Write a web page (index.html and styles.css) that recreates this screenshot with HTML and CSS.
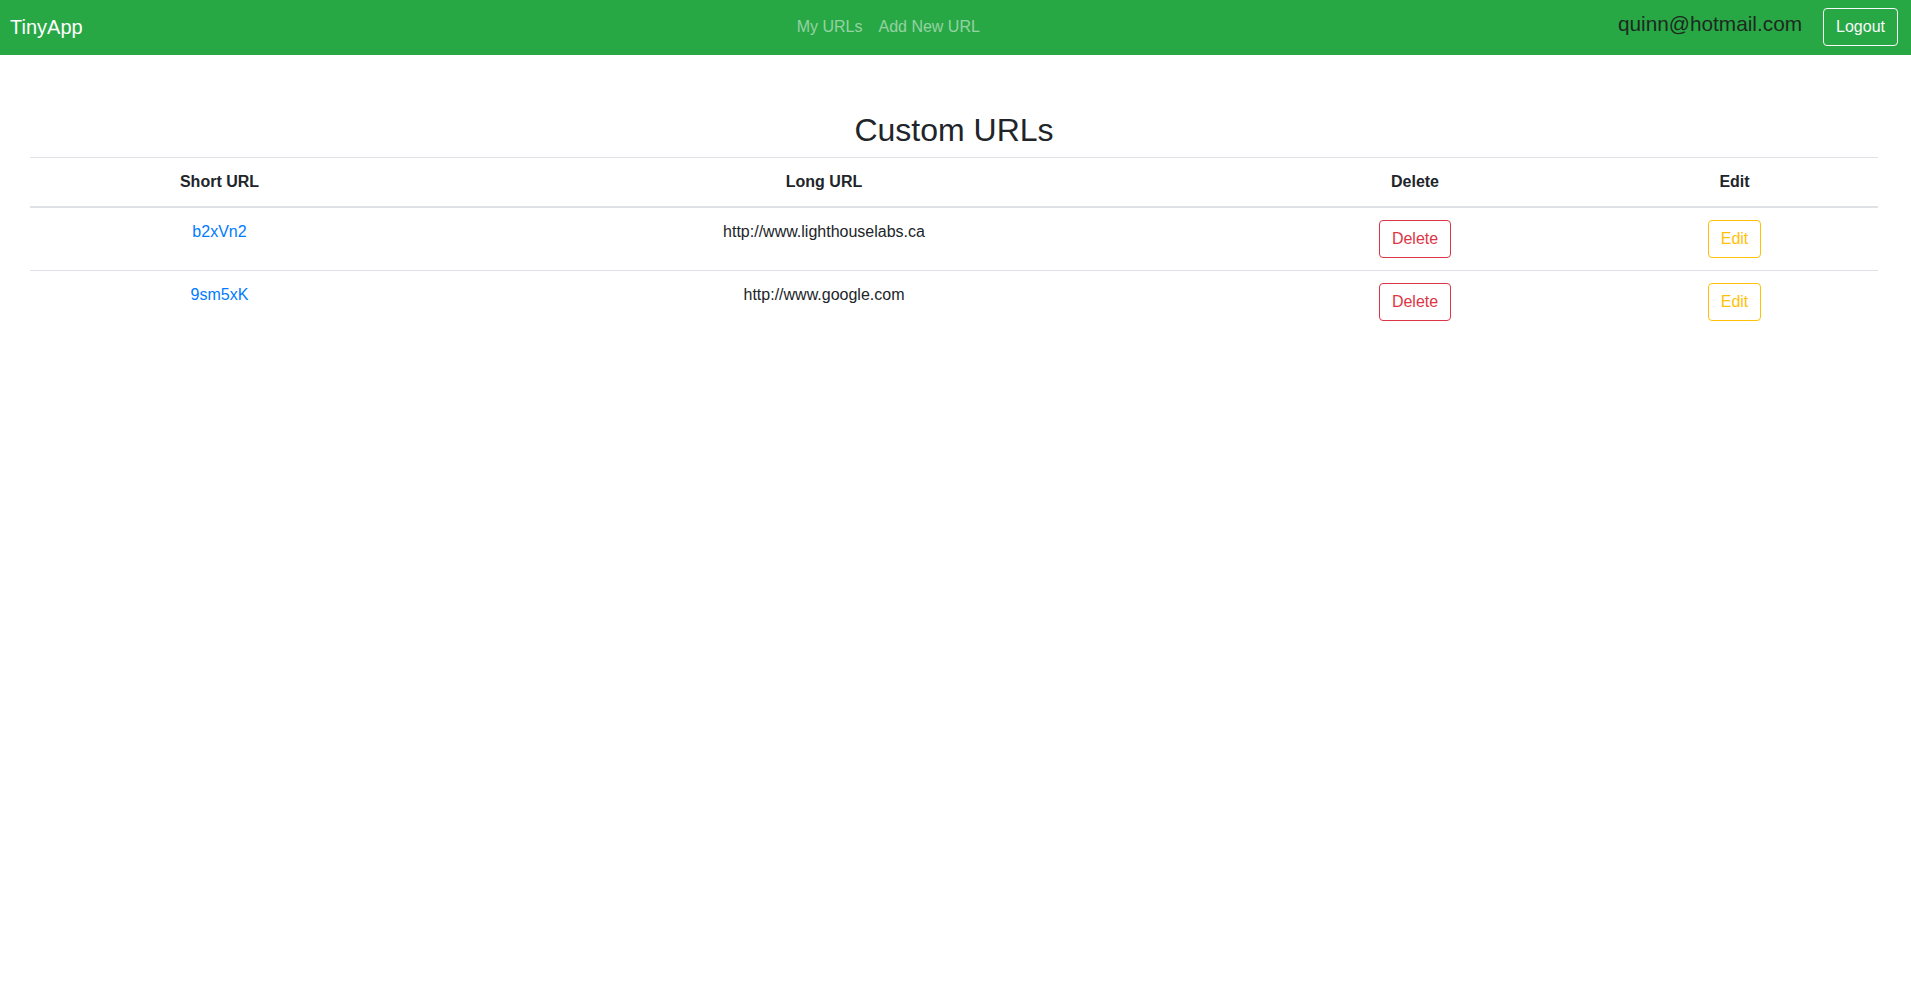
FILE: index.html
```html
<!DOCTYPE html>
<html lang="en">
<head>
<meta charset="utf-8">
<title>TinyApp</title>
<link rel="stylesheet" href="styles.css">
</head>
<body>
<nav class="navbar">
  <a class="brand" href="#">TinyApp</a>
  <div class="nav-links">
    <a class="nav-link" href="#">My URLs</a>
    <a class="nav-link" href="#">Add New URL</a>
  </div>
  <div class="user-area">
    <span class="user-email">quinn@hotmail.com</span>
    <button class="btn btn-light-outline" type="button">Logout</button>
  </div>
</nav>
<main class="content">
  <h2 class="page-title">Custom URLs</h2>
  <table class="url-table">
    <colgroup>
      <col class="col-short">
      <col class="col-long">
      <col class="col-delete">
      <col class="col-edit">
    </colgroup>
    <thead>
      <tr>
        <th>Short URL</th>
        <th>Long URL</th>
        <th>Delete</th>
        <th>Edit</th>
      </tr>
    </thead>
    <tbody>
      <tr>
        <td><a class="short-link" href="#">b2xVn2</a></td>
        <td>http://www.lighthouselabs.ca</td>
        <td><button class="btn btn-danger-outline" type="button">Delete</button></td>
        <td><button class="btn btn-warning-outline" type="button">Edit</button></td>
      </tr>
      <tr>
        <td><a class="short-link" href="#">9sm5xK</a></td>
        <td>http://www.google.com</td>
        <td><button class="btn btn-danger-outline" type="button">Delete</button></td>
        <td><button class="btn btn-warning-outline" type="button">Edit</button></td>
      </tr>
    </tbody>
  </table>
</main>
</body>
</html>
```
FILE: styles.css
```css
* {
  box-sizing: border-box;
}

html, body {
  margin: 0;
  padding: 0;
  background: #ffffff;
}

body {
  font-family: "Liberation Sans", Arial, sans-serif;
  font-size: 16px;
  line-height: 1.5;
  color: #212529;
}

.navbar {
  display: flex;
  align-items: center;
  background: #28a745;
  height: 55px;
  padding: 0 13px 1px 10px;
}

.brand {
  font-size: 20px;
  line-height: 30px;
  padding: 5px 0;
  color: #ffffff;
  text-decoration: none;
  margin-right: 76px;
}

.nav-links {
  display: flex;
  margin: 0 auto;
}

.nav-link {
  display: block;
  padding: 8px;
  color: rgba(255, 255, 255, 0.5);
  text-decoration: none;
  line-height: 24px;
}

.user-area {
  display: flex;
  align-items: center;
}

.user-email {
  font-size: 20.8px;
  line-height: 30px;
  color: #1d2a20;
  margin-right: 21px;
  position: relative;
  top: -3px;
}

.btn {
  display: inline-block;
  font-family: "Liberation Sans", Arial, sans-serif;
  font-size: 16px;
  line-height: 24px;
  padding: 6px 12px;
  border: 1px solid transparent;
  border-radius: 4px;
  background: transparent;
  cursor: pointer;
}

.btn-light-outline {
  color: #f8f9fa;
  border-color: #f8f9fa;
}

.btn-danger-outline {
  color: #dc3545;
  border-color: #dc3545;
}

.btn-warning-outline {
  color: #ffc107;
  border-color: #ffc107;
}

.content {
  padding: 0 33px 0 30px;
}

.page-title {
  margin: 56px 0 8px;
  font-size: 32px;
  line-height: 1.2;
  font-weight: 500;
  text-align: center;
  color: #212529;
}

.url-table {
  width: 100%;
  border-collapse: collapse;
  table-layout: fixed;
  color: #212529;
}

.col-short { width: 379px; }
.col-long { width: 830px; }
.col-delete { width: 352px; }

.url-table th,
.url-table td {
  padding: 12px;
  text-align: center;
  vertical-align: top;
  border-top: 1px solid #dee2e6;
}

.url-table th {
  font-weight: bold;
  vertical-align: bottom;
  border-bottom: 2px solid #dee2e6;
}

.short-link {
  color: #007bff;
  text-decoration: none;
}
```
